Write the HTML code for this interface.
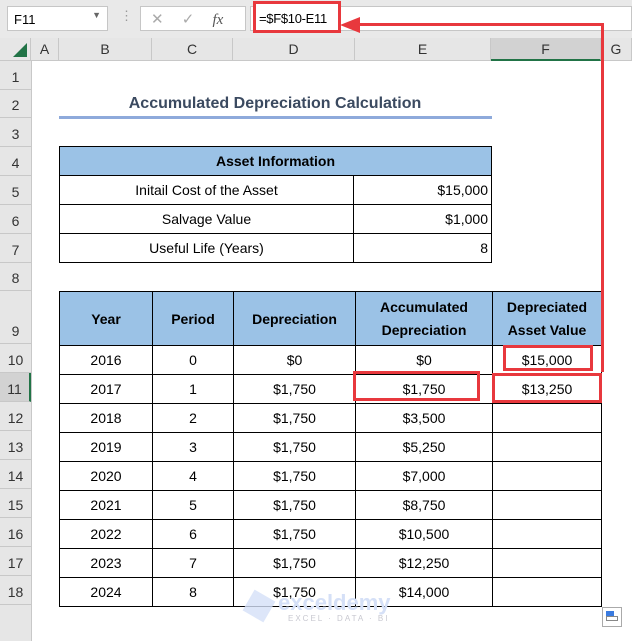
<!DOCTYPE html>
<html><head><meta charset="utf-8"><style>
*{margin:0;padding:0;box-sizing:border-box}
body{width:632px;height:641px;overflow:hidden;background:#fff;font-family:"Liberation Sans",sans-serif;position:relative;color:#000}
.a{position:absolute}
.c{position:absolute;display:flex;align-items:center;justify-content:center;font-size:15px}
.rh{position:absolute;left:0;width:31px;background:#e6e6e6;border-bottom:1px solid #c8c8c8;font-size:14px;color:#333;display:flex;align-items:flex-end;justify-content:center;padding-bottom:4px}
.ch{position:absolute;top:38px;height:23px;background:#e6e6e6;border-right:1px solid #c8c8c8;font-size:14px;color:#333;display:flex;align-items:center;justify-content:center;border-bottom:1px solid #c8c8c8}
.t td{border:1px solid #000;text-align:center;font-size:14px;padding:0;white-space:nowrap}
.red{position:absolute;border:3px solid #e8383d}
</style></head><body>
<div class="a" style="left:0;top:0;width:632px;height:38px;background:#e9e9e9"></div>
<div class="a" style="left:7px;top:6px;width:101px;height:25px;background:#fff;border:1px solid #c6c6c6;font-size:13px;padding:5px 6px">F11<span style="position:absolute;right:6px;top:3px;font-size:9px;color:#666">▼</span></div>
<div class="a" style="left:120px;top:8px;color:#999;font-size:13px">⋮</div>
<div class="a" style="left:140px;top:6px;width:106px;height:25px;background:#fff;border:1px solid #c6c6c6;color:#aaa;font-size:15px;padding:3px 10px;word-spacing:14px;white-space:nowrap">✕ ✓ <i style="font-family:'Liberation Serif';color:#555">fx</i></div>
<div class="a" style="left:250px;top:6px;width:382px;height:25px;background:#fff;border:1px solid #c6c6c6"></div>
<div class="a" style="left:253px;top:1px;width:88px;height:32px;border:3px solid #e8383d;background:#fff;font-size:13px;padding:7px 3px;white-space:nowrap;letter-spacing:-0.3px">=$F$10-E11</div>
<div class="ch" style="left:0;width:31px"><svg width="14" height="14" style="position:absolute;right:3px;bottom:3px"><path d="M14 0L14 14L0 14Z" fill="#217346"/></svg></div>
<div class="ch" style="left:31px;width:28px">A</div>
<div class="ch" style="left:59px;width:93px">B</div>
<div class="ch" style="left:152px;width:81px">C</div>
<div class="ch" style="left:233px;width:122px">D</div>
<div class="ch" style="left:355px;width:136px">E</div>
<div class="ch" style="left:491px;width:110px;background:#d2d2d2;border-bottom:2px solid #217346">F</div>
<div class="ch" style="left:601px;width:31px">G</div>
<div class="rh" style="top:61px;height:29px">1</div>
<div class="rh" style="top:90px;height:28px">2</div>
<div class="rh" style="top:118px;height:29px">3</div>
<div class="rh" style="top:147px;height:29px">4</div>
<div class="rh" style="top:176px;height:29px">5</div>
<div class="rh" style="top:205px;height:29px">6</div>
<div class="rh" style="top:234px;height:29px">7</div>
<div class="rh" style="top:263px;height:28px">8</div>
<div class="rh" style="top:291px;height:53px">9</div>
<div class="rh" style="top:344px;height:29px">10</div>
<div class="rh" style="top:373px;height:29px;background:#d2d2d2;border-right:2px solid #217346">11</div>
<div class="rh" style="top:402px;height:29px">12</div>
<div class="rh" style="top:431px;height:29px">13</div>
<div class="rh" style="top:460px;height:29px">14</div>
<div class="rh" style="top:489px;height:29px">15</div>
<div class="rh" style="top:518px;height:29px">16</div>
<div class="rh" style="top:547px;height:29px">17</div>
<div class="rh" style="top:576px;height:29px">18</div>
<div class="rh" style="top:605px;height:36px;border:none"></div>
<div class="a" style="left:31px;top:61px;width:1px;height:580px;background:#c8c8c8"></div>
<div class="c" style="left:59px;top:90px;width:432px;height:28px;font-weight:bold;color:#3b4a60;font-size:16px">Accumulated Depreciation Calculation</div>
<div class="a" style="left:59px;top:116px;width:433px;height:3px;background:#8eaadb"></div>
<table class="t a" style="left:59px;top:146px;border-collapse:collapse;width:433px">
<tr style="height:29px;background:#9bc2e6"><td colspan="2" style="font-weight:bold">Asset Information</td></tr>
<tr style="height:29px"><td style="width:294px">Initail Cost of the Asset</td><td style="text-align:right;padding-right:3px">$15,000</td></tr>
<tr style="height:29px"><td>Salvage Value</td><td style="text-align:right;padding-right:3px">$1,000</td></tr>
<tr style="height:29px"><td>Useful Life (Years)</td><td style="text-align:right;padding-right:3px">8</td></tr>
</table>
<table class="t a" style="left:59px;top:291px;border-collapse:collapse;width:543px">
<tr style="height:54px;background:#9bc2e6"><td style="width:93px;font-weight:bold">Year</td><td style="width:81px;font-weight:bold">Period</td><td style="width:122px;font-weight:bold">Depreciation</td><td style="width:137px;font-weight:bold;line-height:23px">Accumulated<br>Depreciation</td><td style="font-weight:bold;line-height:23px">Depreciated<br>Asset Value</td></tr>
<tr style="height:29px"><td>2016</td><td>0</td><td>$0</td><td>$0</td><td>$15,000</td></tr>
<tr style="height:29px"><td>2017</td><td>1</td><td>$1,750</td><td>$1,750</td><td>$13,250</td></tr>
<tr style="height:29px"><td>2018</td><td>2</td><td>$1,750</td><td>$3,500</td><td></td></tr>
<tr style="height:29px"><td>2019</td><td>3</td><td>$1,750</td><td>$5,250</td><td></td></tr>
<tr style="height:29px"><td>2020</td><td>4</td><td>$1,750</td><td>$7,000</td><td></td></tr>
<tr style="height:29px"><td>2021</td><td>5</td><td>$1,750</td><td>$8,750</td><td></td></tr>
<tr style="height:29px"><td>2022</td><td>6</td><td>$1,750</td><td>$10,500</td><td></td></tr>
<tr style="height:29px"><td>2023</td><td>7</td><td>$1,750</td><td>$12,250</td><td></td></tr>
<tr style="height:29px"><td>2024</td><td>8</td><td>$1,750</td><td>$14,000</td><td></td></tr>
</table>
<div class="red" style="left:503px;top:345px;width:90px;height:26px"></div>
<div class="red" style="left:353px;top:371px;width:127px;height:30px"></div>
<div class="red" style="left:492px;top:373px;width:110px;height:30px"></div>
<div class="a" style="left:601px;top:23px;width:3px;height:349px;background:#e8383d"></div>
<div class="a" style="left:356px;top:23px;width:248px;height:3px;background:#e8383d"></div>
<svg class="a" style="left:340px;top:16px" width="22" height="18"><path d="M0 9L20 1L20 17Z" fill="#e8383d"/></svg>
<div class="a" style="left:247px;top:594px;width:24px;height:24px;background:#d5e0f7;opacity:.8;transform:rotate(30deg)"></div>
<div class="a" style="left:278px;top:590px;font-size:22px;font-weight:bold;color:#d5e0f7">exceldemy</div>
<div class="a" style="left:288px;top:614px;font-size:8px;color:#c8c8d0;letter-spacing:2px">EXCEL · DATA · BI</div>
<div class="a" style="left:602px;top:607px;width:20px;height:20px;border:1px solid #aaa;background:#fff"><div class="a" style="left:3px;top:3px;width:8px;height:5px;background:#3a7be0"></div><div class="a" style="left:3px;top:8px;width:12px;height:5px;border:1px solid #888"></div></div>
</body></html>
